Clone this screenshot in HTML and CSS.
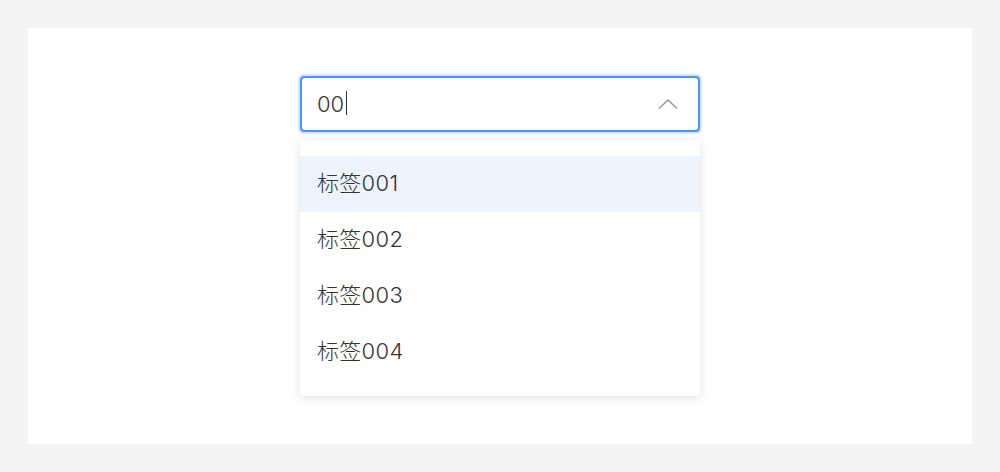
FILE: index.html
```html
<!DOCTYPE html>
<html lang="zh">
<head>
<meta charset="utf-8">
<link rel="stylesheet" href="styles.css">
</head>
<body>
<div class="card">
  <div class="select">
    <div class="input">
      <span class="value">00</span><span class="caret"></span>
      <svg class="arrow" width="20" height="12" viewBox="0 0 20 12"><path d="M1 10.5 L10 2 L19 10.5" fill="none" stroke="#999" stroke-width="1.6"/></svg>
    </div>
    <ul class="menu">
      <li class="item active">标签001</li>
      <li class="item">标签002</li>
      <li class="item">标签003</li>
      <li class="item">标签004</li>
    </ul>
  </div>
</div>
</body>
</html>
```
FILE: styles.css
```css
* { box-sizing: border-box; }
html, body { margin: 0; padding: 0; }
body {
  background: #f3f3f3;
  padding: 28px;
  font-family: "Inter", "Noto Sans CJK SC", sans-serif;
  color: #333;
}
.card {
  background: #fff;
  height: 416px;
  display: flex;
  justify-content: center;
  padding-top: 48px;
}
.select {
  position: relative;
  width: 400px;
}
.input {
  height: 56px;
  border: 2px solid #4a93f7;
  border-radius: 4px;
  box-shadow: 0 0 0 2px #d6e6fd;
  display: flex;
  align-items: center;
  padding-left: 15px;
  padding-right: 20px;
  font-size: 22px;
  font-weight: 300;
}
.caret {
  display: inline-block;
  width: 1px;
  height: 24px;
  background: #333;
  margin-left: 2px;
  margin-bottom: 3px;
}
.arrow { margin-left: auto; }
.menu {
  position: absolute;
  left: 0;
  right: 0;
  top: 64px;
  margin: 0;
  padding: 16px 0;
  list-style: none;
  background: #fff;
  border-radius: 4px;
  box-shadow: 0 2px 10px rgba(0,0,0,0.12);
}
.item {
  height: 56px;
  line-height: 54px;
  padding-left: 17px;
  font-size: 22px;
  font-weight: 300;
  color: #333;
  letter-spacing: 0.3px;
}
.item.active { background: #edf4fe; }
```
